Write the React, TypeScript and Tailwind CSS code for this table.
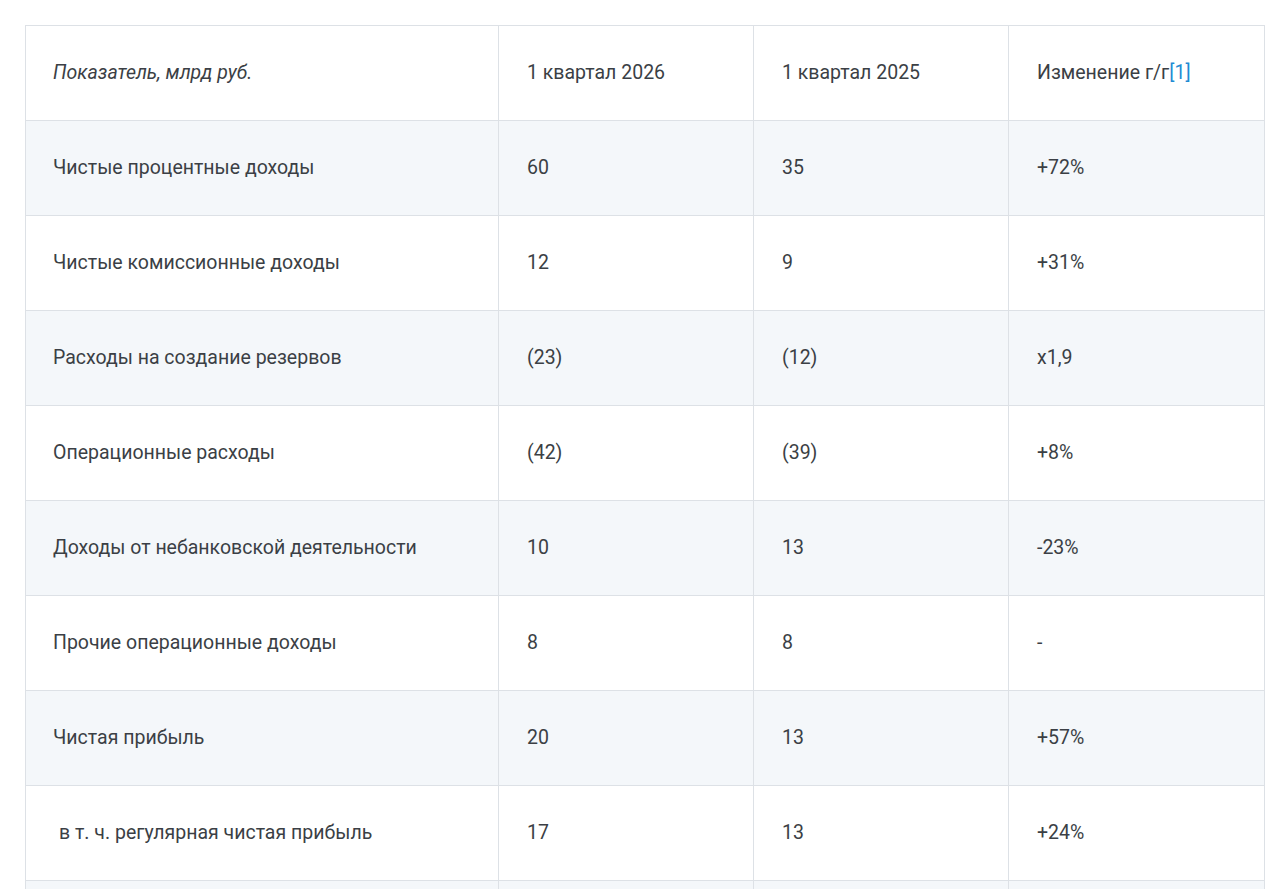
import React from 'react';

interface Row {
  label: string;
  q2026: string;
  q2025: string;
  change: string;
  indent?: boolean;
}

const rows: Row[] = [
  { label: 'Чистые процентные доходы', q2026: '60', q2025: '35', change: '+72%' },
  { label: 'Чистые комиссионные доходы', q2026: '12', q2025: '9', change: '+31%' },
  { label: 'Расходы на создание резервов', q2026: '(23)', q2025: '(12)', change: 'x1,9' },
  { label: 'Операционные расходы', q2026: '(42)', q2025: '(39)', change: '+8%' },
  { label: 'Доходы от небанковской деятельности', q2026: '10', q2025: '13', change: '-23%' },
  { label: 'Прочие операционные доходы', q2026: '8', q2025: '8', change: '-' },
  { label: 'Чистая прибыль', q2026: '20', q2025: '13', change: '+57%' },
  { label: 'в т. ч. регулярная чистая прибыль', q2026: '17', q2025: '13', change: '+24%', indent: true },
  { label: '', q2026: '', q2025: '', change: '' },
];

const cell = 'h-[95px] border border-[#dde1e6] pr-3 align-middle';

export default function App() {
  return (
    <div className="min-h-screen bg-white pt-[25px] pl-[25px] font-['Roboto',sans-serif] text-[19.5px] text-[#3b3f45]">
      <table className="w-[1239px] table-fixed border-collapse">
        <colgroup>
          <col className="w-[473px]" />
          <col className="w-[255px]" />
          <col className="w-[255px]" />
          <col className="w-[256px]" />
        </colgroup>
        <thead>
          <tr className="bg-white">
            <th className={`${cell} pl-[27px] text-left font-normal italic`}>Показатель, млрд руб.</th>
            <th className={`${cell} pl-[28px] text-left font-normal`}>1 квартал 2026</th>
            <th className={`${cell} pl-[28px] text-left font-normal`}>1 квартал 2025</th>
            <th className={`${cell} pl-[28px] text-left font-normal`}>
              Изменение г/г<a className="text-[#1f8bd3]">[1]</a>
            </th>
          </tr>
        </thead>
        <tbody>
          {rows.map((r, i) => (
            <tr key={i} className={i % 2 === 0 ? 'bg-[#f4f7fa]' : 'bg-white'}>
              <td className={`${cell} pl-[27px]`}>
                {r.indent ? <span className="pl-[6px]">{r.label}</span> : r.label}
              </td>
              <td className={`${cell} pl-[28px]`}>{r.q2026}</td>
              <td className={`${cell} pl-[28px]`}>{r.q2025}</td>
              <td className={`${cell} pl-[28px]`}>{r.change}</td>
            </tr>
          ))}
        </tbody>
      </table>
    </div>
  );
}
